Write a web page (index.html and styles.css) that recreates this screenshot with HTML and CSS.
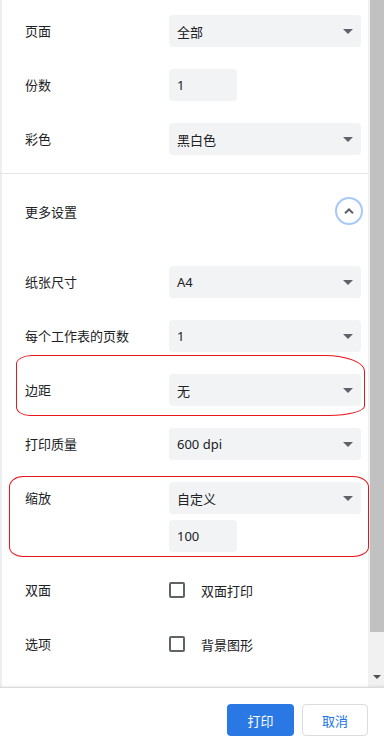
FILE: index.html
```html
<!DOCTYPE html>
<html lang="zh-CN">
<head>
<meta charset="utf-8">
<title>打印设置</title>
<link rel="stylesheet" href="styles.css">
</head>
<body>
<div class="dialog">
  <div class="main">
    <div class="content">
      <div class="section basic">
        <div class="row">
          <div class="label">页面</div>
          <div class="controls"><div class="select"><span>全部</span><span class="caret"></span></div></div>
        </div>
        <div class="row">
          <div class="label">份数</div>
          <div class="controls"><div class="input">1</div></div>
        </div>
        <div class="row">
          <div class="label">彩色</div>
          <div class="controls"><div class="select"><span>黑白色</span><span class="caret"></span></div></div>
        </div>
      </div>
      <div class="divider"></div>
      <div class="more">
        <div class="more-label">更多设置</div>
        <div class="expand">
          <svg width="12" height="8" viewBox="0 0 12 8"><polyline points="2,6.2 6,2.4 10,6.2" fill="none" stroke="#5f6368" stroke-width="2"/></svg>
        </div>
      </div>
      <div class="section advanced">
        <div class="row">
          <div class="label">纸张尺寸</div>
          <div class="controls"><div class="select"><span>A4</span><span class="caret"></span></div></div>
        </div>
        <div class="row">
          <div class="label">每个工作表的页数</div>
          <div class="controls"><div class="select"><span>1</span><span class="caret"></span></div></div>
        </div>
        <div class="row mark mark-margin">
          <div class="label">边距</div>
          <div class="controls"><div class="select"><span>无</span><span class="caret"></span></div></div>
        </div>
        <div class="row">
          <div class="label">打印质量</div>
          <div class="controls"><div class="select"><span>600 dpi</span><span class="caret"></span></div></div>
        </div>
        <div class="row mark mark-scale">
          <div class="label">缩放</div>
          <div class="controls">
            <div class="select"><span>自定义</span><span class="caret"></span></div>
            <div class="input">100</div>
          </div>
        </div>
        <div class="row">
          <div class="label">双面</div>
          <div class="controls check"><span class="box"></span><span class="check-label">双面打印</span></div>
        </div>
        <div class="row">
          <div class="label">选项</div>
          <div class="controls check"><span class="box"></span><span class="check-label">背景图形</span></div>
        </div>
      </div>
    </div>
    <div class="scrollbar">
      <div class="thumb"></div>
      <div class="track"></div>
      <div class="arrow-btn"><span class="arrow"></span></div>
    </div>
  </div>
  <div class="footer">
    <button class="btn primary">打印</button>
    <button class="btn secondary">取消</button>
  </div>
</div>
</body>
</html>
```

FILE: styles.css
```css
* { box-sizing: border-box; }
html, body {
  margin: 0;
  padding: 0;
  background: #ffffff;
}
body {
  width: 384px;
  height: 745px;
  overflow: hidden;
  font-family: "Noto Sans", "Noto Sans CJK SC", sans-serif;
  font-size: 13px;
  color: #202124;
}
.dialog {
  display: flex;
  flex-direction: column;
  width: 384px;
  height: 745px;
}
.main {
  display: flex;
  height: 687px;
  flex: none;
}
.content {
  width: 368px;
  flex: none;
  border-left: 2px solid #eceef1;
  padding-top: 15px;
}
.section {
  display: flex;
  flex-direction: column;
  gap: 22px;
}
.row {
  display: flex;
  align-items: flex-start;
  padding-left: 23px;
  padding-right: 5px;
}
.label {
  width: 144px;
  flex: none;
  line-height: 32px;
  white-space: nowrap;
}
.controls {
  display: flex;
  flex-direction: column;
  gap: 6px;
}
.select {
  width: 192px;
  height: 32px;
  background: #f1f3f4;
  border-radius: 4px;
  display: flex;
  align-items: center;
  justify-content: space-between;
  padding: 0 8px;
}
.caret {
  width: 0;
  height: 0;
  border-left: 5px solid transparent;
  border-right: 5px solid transparent;
  border-top: 5px solid #5f6368;
}
.input {
  width: 68px;
  height: 32px;
  background: #f1f3f4;
  border-radius: 4px;
  display: flex;
  align-items: center;
  padding: 0 8px;
}
.divider {
  height: 1px;
  background: #e3e5e8;
  margin-top: 18px;
  margin-left: -2px;
}
.more {
  display: flex;
  align-items: center;
  justify-content: space-between;
  margin-top: 23px;
  height: 28px;
  padding-left: 23px;
  padding-right: 5px;
}
.expand {
  width: 28px;
  height: 28px;
  border: 2px solid #a8c7fa;
  border-radius: 50%;
  display: flex;
  align-items: center;
  justify-content: center;
}
.expand svg { display: block; }
.advanced {
  margin-top: 41px;
}
.check {
  flex-direction: row;
  align-items: center;
  height: 32px;
  gap: 0;
}
.box {
  width: 16px;
  height: 16px;
  border: 2px solid #5f6368;
  border-radius: 2px;
  margin-right: 16px;
}
.mark {
  position: relative;
}
.mark::before {
  content: "";
  position: absolute;
  border: 1px solid #e8161c;
  pointer-events: none;
}
.mark-margin::before {
  left: 14px;
  right: 3px;
  top: -19px;
  bottom: -10px;
  border-radius: 16px 40px 36px 14px / 9px 16px 10px 9px;
}
.mark-scale::before {
  left: 7px;
  right: -1px;
  top: -6px;
  bottom: -5px;
  border-radius: 14px 16px 16px 14px / 11px 11px 10px 10px;
}
.scrollbar {
  width: 16px;
  flex: none;
  background: #f1f1f1;
  display: flex;
  flex-direction: column;
  padding-left: 2px;
}
.thumb {
  height: 632px;
  background: #c1c1c1;
  flex: none;
}
.track {
  flex: 1;
}
.arrow-btn {
  height: 17px;
  display: flex;
  align-items: center;
  justify-content: center;
  padding-bottom: 3px;
}
.arrow {
  width: 0;
  height: 0;
  border-left: 4px solid transparent;
  border-right: 4px solid transparent;
  border-top: 4px solid #505050;
}
.footer {
  flex: 1;
  border-top: 1px solid #d9dadc;
  box-shadow: 0 -1px 2px rgba(0, 0, 0, 0.08);
  display: flex;
  justify-content: flex-end;
  align-items: flex-start;
  gap: 8px;
  padding-top: 16px;
  padding-right: 16px;
  position: relative;
  background: #ffffff;
}
.btn {
  height: 32px;
  border-radius: 4px;
  font-family: "Noto Sans", "Noto Sans CJK SC", sans-serif;
  font-size: 13px;
  padding: 0;
  cursor: pointer;
}
.primary {
  width: 67px;
  background: #2a78e4;
  color: #ffffff;
  border: none;
}
.secondary {
  width: 66px;
  background: #ffffff;
  color: #1a73e8;
  border: 1px solid #dadce0;
}
```
